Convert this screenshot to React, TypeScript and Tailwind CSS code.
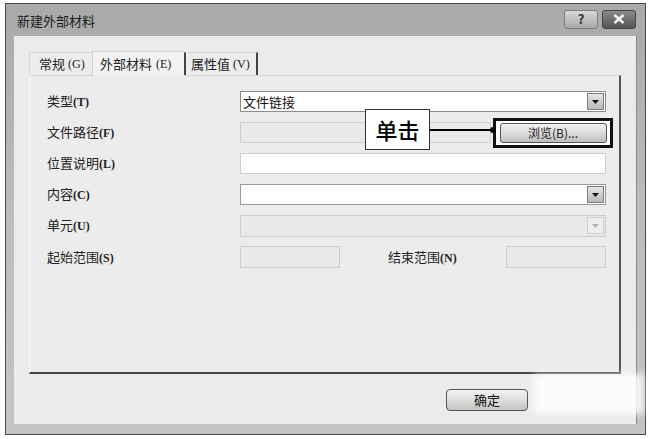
import React from "react";

const font = { fontFamily: '"Noto Sans CJK SC", "Liberation Sans", sans-serif' };
const serif = { fontFamily: '"Liberation Serif", serif' };

const Arrow: React.FC<{ disabled?: boolean }> = ({ disabled }) => (
  <div
    className={
      "w-[17px] h-[17px] flex items-center justify-center border shrink-0 " +
      (disabled
        ? "border-[#d0d0d0] bg-[#eeeeee]"
        : "border-[#7a7a7a] bg-gradient-to-b from-[#e6e6e6] to-[#b8b8b8]")
    }
  >
    <svg width="7" height="4" viewBox="0 0 7 4">
      <path d="M0 0 L7 0 L3.5 4 Z" fill={disabled ? "#b0b0b0" : "#111"} />
    </svg>
  </div>
);

const Label: React.FC<{ cn: string; key2: string; w?: string }> = ({ cn, key2, w }) => (
  <div className={"shrink-0 text-[13px] text-[#222] leading-[21px] whitespace-nowrap " + (w ?? "w-[193px]")}>
    {cn}
    <span className="text-[12px] font-bold" style={serif}>
      ({key2})
    </span>
  </div>
);

export default function App() {
  return (
    <div className="w-[650px] h-[439px] bg-white relative overflow-hidden" style={font}>
      <div className="ml-[5px] mt-[3px] w-[641px] h-[432px] border border-[#4a4a4a] bg-gradient-to-b from-[#a9a9a9] via-[#bdbdbd] to-[#c4c4c4] flex flex-col">
        {/* title bar */}
        <div className="h-[32px] flex items-center justify-between pl-[11px] pr-[9px]">
          <span className="text-[13px] text-[#1a1a1a] pt-[2px]">新建外部材料</span>
          <div className="flex gap-[4px] mt-[-2px]">
            <div className="w-[34px] h-[19px] rounded-[3px] border border-[#7d7d7d] bg-gradient-to-b from-[#d8d8d8] to-[#a8a8a8] flex items-center justify-center text-[13px] font-bold text-[#333]">
              ?
            </div>
            <div className="w-[34px] h-[19px] rounded-[3px] border border-[#444] bg-gradient-to-b from-[#8a8a8a] to-[#555] flex items-center justify-center">
              <svg width="12" height="10" viewBox="0 0 12 10">
                <path d="M1.5 1 L10.5 9 M10.5 1 L1.5 9" stroke="#f4f4f4" strokeWidth="2.4" />
              </svg>
            </div>
          </div>
        </div>
        {/* client */}
        <div className="ml-[8px] mr-[8px] h-[388px] bg-[#ebebeb] border-r border-[#888] relative">
          {/* tabs */}
          <div className="flex items-end h-[39px] pl-[15px] pt-[14px]">
            <div className="w-[63px] h-[23px] pl-[9px] flex items-center text-[13px] text-[#222] border-t border-l border-[#d6d6d6] bg-[#ececec] whitespace-nowrap">
              常规<span className="text-[12px] ml-[3px]" style={serif}>(G)</span>
            </div>
            <div className="w-[92px] h-[25px] pl-[7px] flex items-center text-[13px] text-[#222] border-t border-l border-[#d0d0d0] bg-[#f2f2f2] mb-[-1px] z-10 whitespace-nowrap">
              外部材料<span className="text-[12px] ml-[4px]" style={serif}>(E)</span>
            </div>
            <div className="w-[74px] h-[23px] pl-[5px] flex items-center text-[13px] text-[#222] border-l-2 border-r-2 border-t border-l-[#444] border-r-[#444] border-t-[#d6d6d6] bg-[#ececec] whitespace-nowrap">
              属性值<span className="text-[12px] ml-[3px]" style={serif}>(V)</span>
            </div>
          </div>
          {/* panel */}
          <div className="ml-[15px] w-[592px] h-[299px] border-t border-l border-t-[#d4d4d4] border-l-[#f8f8f8] border-r-2 border-r-[#555] border-b-2 border-b-[#444] bg-[#ececec] flex flex-col gap-[10px] pt-[15px] pl-[17px] pr-[13px]">
            <div className="flex items-center h-[21px]">
              <Label cn="类型" key2="T" />
              <div className="flex-1 h-[21px] border border-[#8c8c8c] bg-white flex items-center justify-between pl-[2px] pr-[1px]">
                <span className="text-[13px] text-[#111]">文件链接</span>
                <Arrow />
              </div>
            </div>
            <div className="flex items-center h-[21px]">
              <Label cn="文件路径" key2="F" />
              <div className="shrink-0 w-[251px] h-[21px] border border-[#cfcfcf] bg-[#e9e9e9]" />
              <div className="shrink-0 ml-[2px] w-[120px] h-[30px] border-[3px] border-[#111] bg-white flex items-center justify-center">
                <div className="w-[107px] h-[20px] rounded-[3px] border border-[#555] bg-gradient-to-b from-[#f2f2f2] via-[#dcdcdc] to-[#bdbdbd] flex items-center justify-center text-[12px] text-[#222]">
                  浏览(B)...
                </div>
              </div>
            </div>
            <div className="flex items-center h-[21px]">
              <Label cn="位置说明" key2="L" />
              <div className="flex-1 h-[21px] border border-[#cfcfcf] bg-white" />
            </div>
            <div className="flex items-center h-[21px]">
              <Label cn="内容" key2="C" />
              <div className="flex-1 h-[21px] border border-[#9a9a9a] bg-white flex items-center justify-end pr-[1px]">
                <Arrow />
              </div>
            </div>
            <div className="flex items-center h-[21px]">
              <Label cn="单元" key2="U" />
              <div className="flex-1 h-[22px] border border-[#cdcdcd] bg-[#e9e9e9] flex items-center justify-end pr-[1px]">
                <Arrow disabled />
              </div>
            </div>
            <div className="flex items-center h-[22px]">
              <Label cn="起始范围" key2="S" />
              <div className="shrink-0 w-[100px] h-[22px] border border-[#cdcdcd] bg-[#e9e9e9]" />
              <div className="ml-[48px]">
                <Label cn="结束范围" key2="N" w="w-[118px]" />
              </div>
              <div className="shrink-0 w-[100px] h-[22px] border border-[#cdcdcd] bg-[#e9e9e9]" />
            </div>
          </div>
          {/* callout */}
          <div className="absolute left-[351px] top-[73px] w-[65px] h-[41px] border border-[#333] bg-white flex items-center justify-center text-[22px] font-medium text-black">
            单击
          </div>
          <div className="absolute left-[416px] top-[93px] w-[62px] h-[2px] bg-black" />
          <div className="absolute left-[476px] top-[91px] w-[6px] h-[6px] rounded-full bg-black" />
          {/* footer */}
          <div className="flex justify-end pr-[108px] pt-[15px]">
            <div className="w-[82px] h-[22px] rounded-[4px] border border-[#555] bg-gradient-to-b from-[#f3f3f3] via-[#dedede] to-[#c2c2c2] flex items-center justify-center text-[13px] text-[#111]">
              确定
            </div>
          </div>
          {/* watermark smudge */}
          <div className="absolute left-[520px] top-[338px] w-[110px] h-[40px] bg-white/80 blur-[3px]" />
        </div>
      </div>
    </div>
  );
}
